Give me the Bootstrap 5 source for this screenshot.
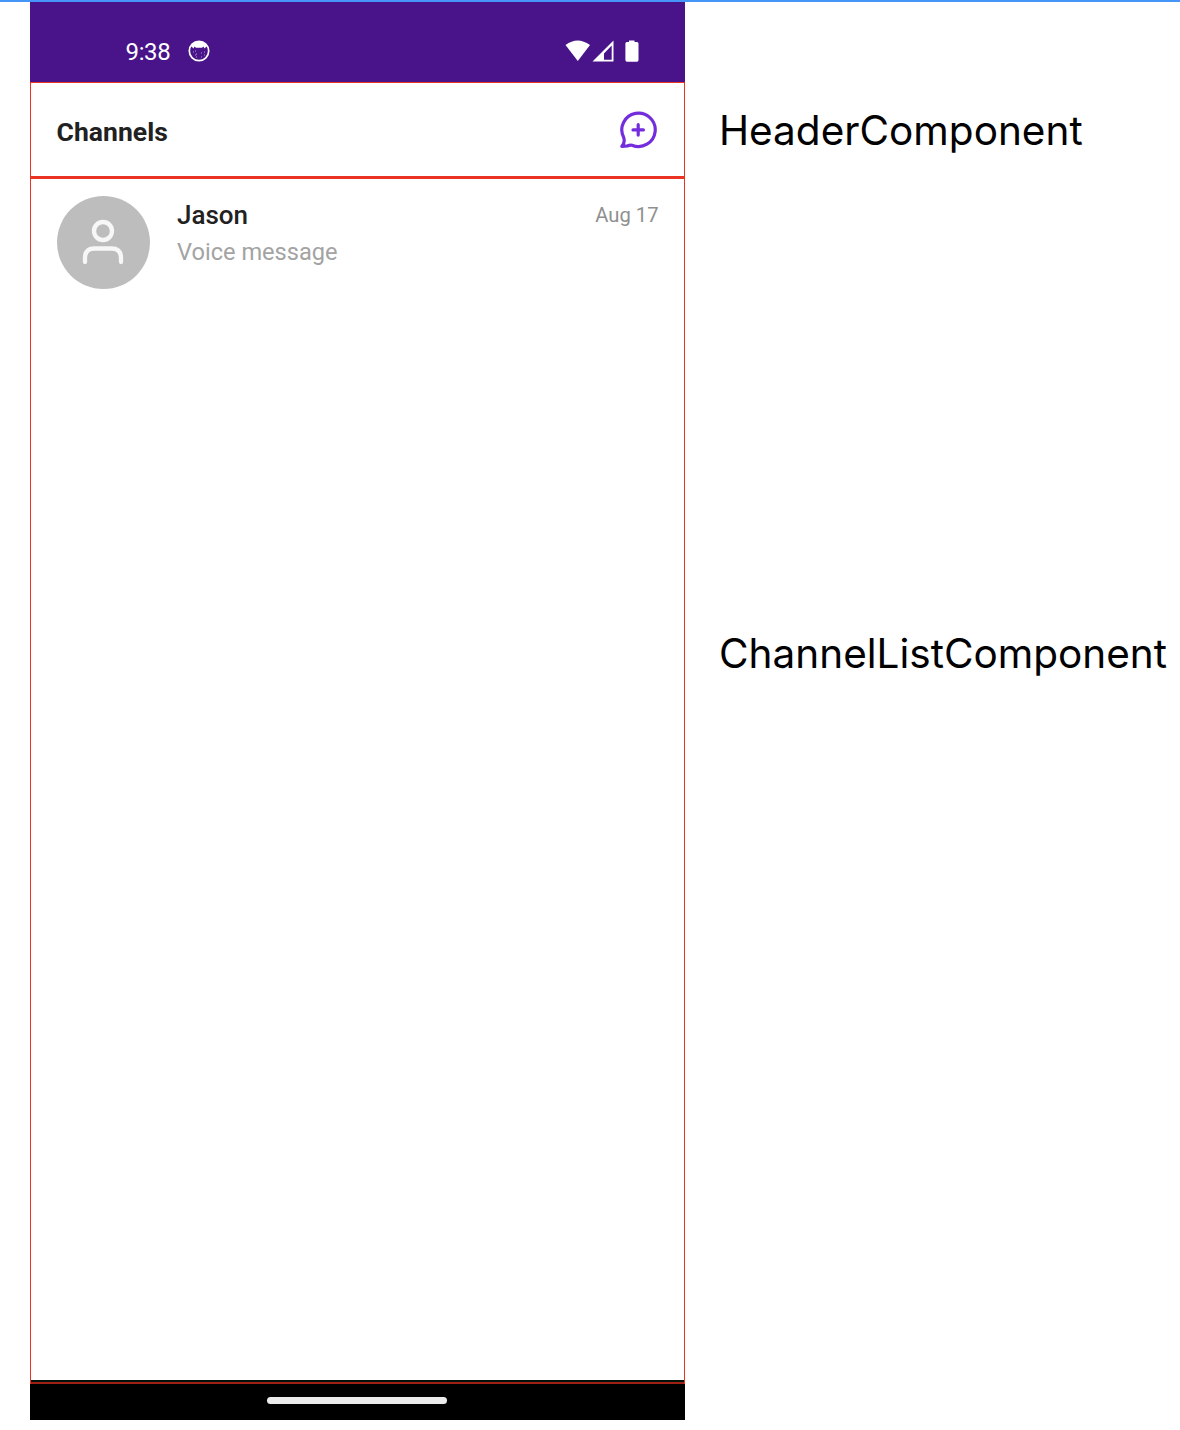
<!DOCTYPE html>
<html lang="en">
<head>
<meta charset="utf-8">
<meta name="viewport" content="width=device-width, initial-scale=1">
<title>Channel list components</title>
<link href="https://cdn.jsdelivr.net/npm/bootstrap@5.3.0/dist/css/bootstrap.min.css" rel="stylesheet">
<style>
body{font-family:Roboto,"Liberation Sans",sans-serif;background:#fff;line-height:1}
.board{height:1430px;border-top:2px solid #4596f8;padding-left:30px;overflow:hidden}
.phone{width:655px;height:1418px}
.status-bar{height:80px;background:#491389;color:#fff;padding:18px 46px 0 95.5px}
.clock{font-size:24px;letter-spacing:-.35px;padding-top:2px}
.status-face{margin-left:17px}
.header-box{height:95px;border:1px solid #ea3323;padding:0 26px 0 25.5px}
.header-title{font-size:26.5px;font-weight:700;letter-spacing:.05px;color:#212121;padding-top:4px}
.list-box{height:1207px;border:solid #ea3323;border-width:2px 1px 0}
.channel-row{padding:17px 25.5px 0 26px}
.avatar{width:93px;height:93px;background:#bdbdbd}
.avatar svg{margin-right:1px;margin-bottom:1px}
.channel-text{padding:6px 0 0 27px}
.channel-name{font-size:26px;font-weight:500;color:#212121}
.channel-msg{font-size:23.6px;color:#a3a3a3;padding-top:13px}
.channel-date{font-size:20.200px;color:#8f8f8f;padding-top:3px}
.list-end{height:4px;background:#03120b;border-bottom:2px solid #9f2015}
.nav-bar{height:36px;background:#000;padding:13px 1px 0 0}
.home-pill{width:180px;height:7px;background:#ebebeb}
.labels{font-family:Inter,sans-serif;font-size:40.5px;color:#000;padding-left:34px}
.label-header{height:176px;padding-top:109px}
.label-list{padding-top:456px}
svg{display:block}
</style>
</head>
<body>
<div class="board d-flex">
  <main class="phone flex-shrink-0 d-flex flex-column">
    <div class="status-bar d-flex">
      <div class="d-flex align-items-center h-100 w-100 justify-content-between">
        <div class="d-flex align-items-center">
          <span class="clock">9:38</span>
          <svg class="status-face" width="24" height="24" viewBox="0 0 24 24"><circle cx="12" cy="12" r="9.700" fill="none" stroke="#fff" stroke-width="1.700"/><path d="M4 7Q12-2 20 7L17.500 9.500L16.500 7.500L15 8.700H9L7.500 7.500L6.500 9.500Z" fill="#fff"/><path d="M6 13h1m2 2h1m4 -1h1m2-1h1m-9 5h1m4 0h1m-7-6h1m-1 4h1m8 0h1" stroke="#b39bd0" stroke-width="1"/></svg>
        </div>
        <svg width="76" height="26" viewBox="563 38 76 26" fill="#fff"><path d="M565.500 45Q577.500 36 590 45L577.800 61Z"/><path fill-rule="evenodd" d="M613.500 40.500V61.500H592.500ZM611.700 45.500L604 53.500V59.700H611.700Z"/><path d="M629 40.500H634.500V42H637Q638.500 42 638.500 43.500V60Q638.500 61.700 637 61.700H627Q625.400 61.700 625.400 60V43.500Q625.400 42 627 42H629Z"/></svg>
      </div>
    </div>
    <header class="header-box d-flex align-items-center justify-content-between">
      <h1 class="header-title mb-0">Channels</h1>
      <svg width="40" height="40" viewBox="617.500 110 40 40" fill="none" stroke="#742ddd" stroke-width="3.200" stroke-linecap="round" stroke-linejoin="round"><path d="M621.300 146.400Q624.800 142.800 623.200 137.500A16.700 16.700 0 1 1 631.500 145.200Q629.500 144.700 627.300 145.800Z"/><path d="M637.700 124.700V135.100M632.500 129.900H642.900"/></svg>
    </header>
    <section class="list-box d-flex flex-column justify-content-between">
      <div class="channel-row d-flex">
        <div class="avatar rounded-circle d-flex align-items-center justify-content-center flex-shrink-0">
          <svg width="46" height="50" viewBox="80 217 46 50" fill="none" stroke="#f7f7f7" stroke-width="4.300" stroke-linecap="round"><circle cx="103" cy="231" r="9"/><path d="M85 262V258Q85 248.500 94.500 248.500H111.500Q121 248.500 121 258V262"/></svg>
        </div>
        <div class="channel-text flex-grow-1">
          <div class="d-flex justify-content-between">
            <span class="channel-name">Jason</span><span class="channel-date">Aug 17</span>
          </div>
          <div class="channel-msg">Voice message</div>
        </div>
      </div>
      <div class="list-end"></div>
    </section>
    <footer class="nav-bar d-flex justify-content-center"><div class="home-pill rounded-pill"></div></footer>
  </main>
  <aside class="labels">
    <div class="label-header">HeaderComponent</div>
    <div class="label-list">ChannelListComponent</div>
  </aside>
</div>
<script src="https://cdn.jsdelivr.net/npm/bootstrap@5.3.0/dist/js/bootstrap.bundle.min.js"></script>
</body>
</html>
